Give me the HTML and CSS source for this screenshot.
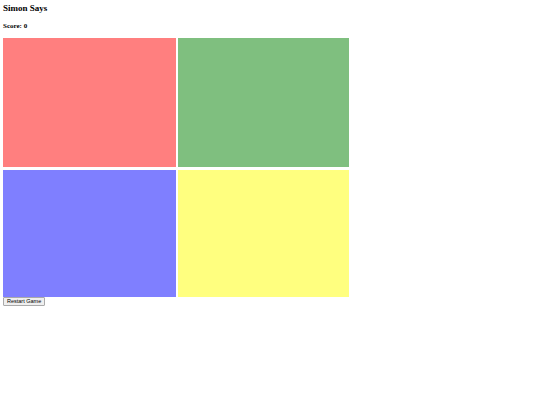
FILE: index.html
```html
<!DOCTYPE html>
<html lang="en">
<head>
    <meta charset="UTF-8">
    <meta name="viewport" content="width=device-width, initial-scale=1.0">
    <title>Simon Says</title>
    <link rel="stylesheet" href="styles.css">
</head>
<body>

<h1 class="title">Simon Says</h1>
<h3 class="score">Score: <span id="score">0</span></h3>

<div class="board">
    <div class="pad red" data-color="red"></div>
    <div class="pad green" data-color="green"></div>
    <div class="pad blue" data-color="blue"></div>
    <div class="pad yellow" data-color="yellow"></div>
</div>

<button class="restart" onclick="restartGame()">Restart Game</button>

<script>
    let score = 0;

    function restartGame() {
        score = 0;
        document.getElementById('score').innerText = score;
    }
</script>

</body>
</html>
```

FILE: styles.css
```css
body {
    font-family: 'Liberation Serif', serif;
    margin: 0;
    padding: 3px;
    background: white;
    color: black;
}
.title {
    font-size: 9px;
    margin: 0;
    line-height: 10px;
}
.score {
    font-size: 7px;
    margin: 9px 0 0;
    line-height: 8px;
}
.board {
    display: grid;
    grid-template-columns: 173px 171px;
    grid-template-rows: 129px 127px;
    column-gap: 2px;
    row-gap: 3px;
    margin-top: 8px;
    width: 346px;
}
.pad {
    opacity: 0.5;
}
.red { background: red; }
.green { background: green; }
.blue { background: blue; }
.yellow { background: yellow; }
.restart {
    display: block;
    font-family: 'Liberation Sans', sans-serif;
    font-size: 5.5px;
    height: 9px;
    padding: 0 3px;
    border: 1px solid #aaa;
    border-radius: 1px;
    background: #efefef;
    line-height: 7px;
}
```
